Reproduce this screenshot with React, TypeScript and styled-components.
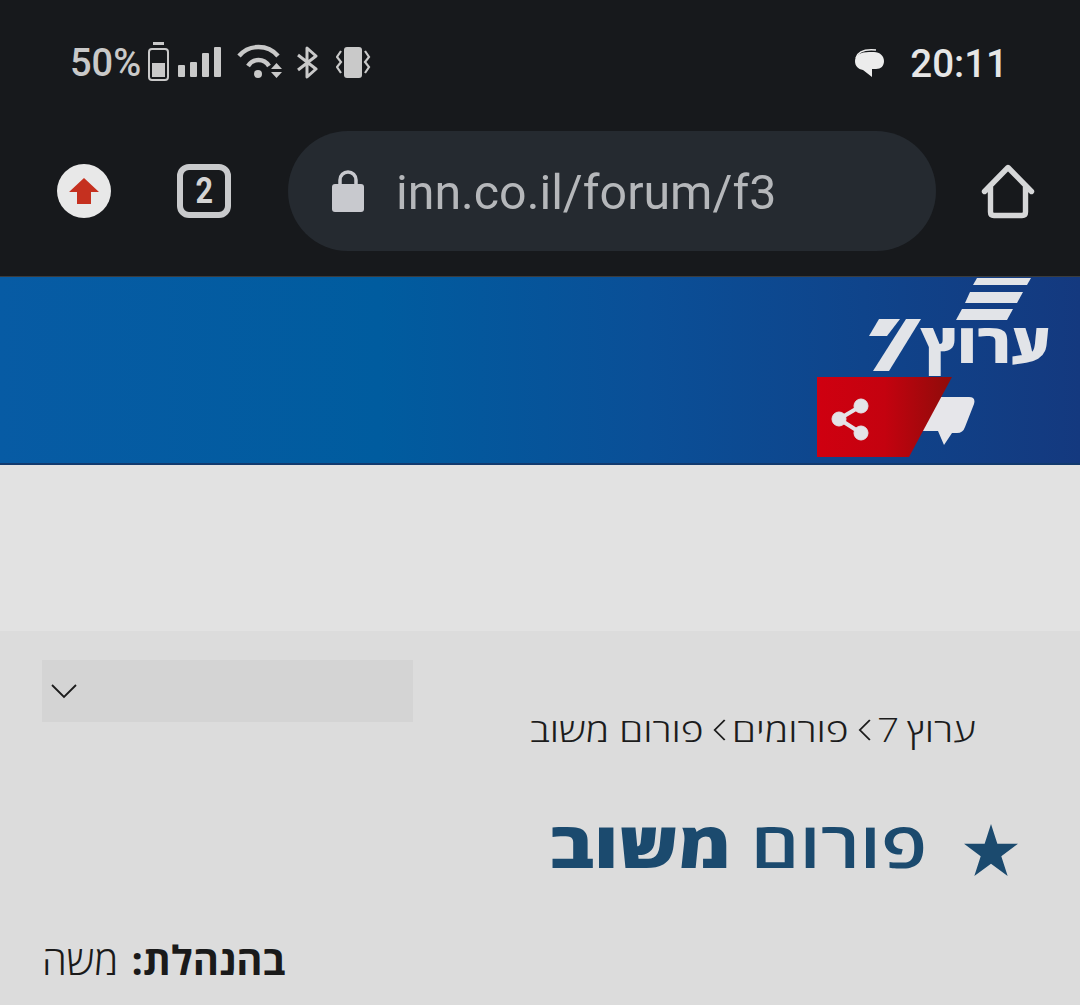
import styled, { createGlobalStyle } from "styled-components";

const GlobalStyle = createGlobalStyle`
  html, body {
    margin: 0;
    padding: 0;
    background: #dcdcdc;
  }
  body {
    font-family: "Liberation Sans", sans-serif;
  }
`;

const crumbs = ["ערוץ 7", "פורומים", "פורום משוב"];

const App = () => {
  return (
    <Page>
      <GlobalStyle />
      <StatusBar>
        <StatusLeft>
          <Percent>50%</Percent>
          <BatteryIcon />
          <SignalIcon />
          <WifiIcon />
          <BluetoothIcon />
          <VibrateIcon />
        </StatusLeft>
        <StatusRight>
          <ChatIcon />
          <Clock>20:11</Clock>
        </StatusRight>
      </StatusBar>
      <Toolbar>
        <UpdateBadge>
          <svg width="30" height="26" viewBox="0 0 30 26">
            <path d="M15 0 L30 14 H22 V26 H8 V14 H0 Z" fill="#c5301f" />
          </svg>
        </UpdateBadge>
        <TabCount>
          <TabDigit>2</TabDigit>
        </TabCount>
        <UrlBar>
          <svg width="32" height="42" viewBox="0 0 32 42">
            <path d="M8 18 V10 a8 8 0 0 1 16 0 V18" fill="none" stroke="#c8c9ce" strokeWidth="3.5" />
            <rect x="0" y="14" width="32" height="28" rx="3" fill="#c8c9ce" />
          </svg>
          <UrlText>inn.co.il/forum/f3</UrlText>
        </UrlBar>
        <HomeButton>
          <svg width="54" height="58" viewBox="0 0 54 58">
            <path
              d="M3.5 29.5 L27 5.5 L50.5 29.5 M9.5 25 V50 Q9.5 53.5 13 53.5 H41 Q44.5 53.5 44.5 50 V25"
              fill="none"
              stroke="#d6d7d8"
              strokeWidth="5.4"
              strokeLinecap="round"
              strokeLinejoin="round"
            />
          </svg>
        </HomeButton>
      </Toolbar>
      <SiteHeader>
        <Logo>
          <svg width="184" height="106" viewBox="0 0 184 106">
            <path d="M109 1 H163 L159 8 H105 Z" fill="#e2e4e8" />
            <path d="M102 15 H155 L149 26 H97 Z" fill="#e2e4e8" />
            <path d="M94 32 H145 L139 43 H88 Z" fill="#e2e4e8" />
            <path d="M11 42 H32 L19 59 H1 Z" fill="#e2e4e8" />
            <path d="M38 42 H53 L21 94 H5 Z" fill="#e2e4e8" />
            <text
              x="0"
              y="0"
              transform="translate(183 86) scale(1.13 1)"
              textAnchor="start"
              direction="rtl"
              fontFamily="'Open Sans', sans-serif"
              fontWeight="800"
              fontSize="55"
              fill="#e2e4e8"
            >
              ערוץ
            </text>
          </svg>
        </Logo>
        <ShareRow>
          <svg width="158" height="80" viewBox="0 0 158 80">
            <defs>
              <linearGradient id="shareRed" x1="0" y1="0" x2="1" y2="0">
                <stop offset="0" stopColor="#cf0010" />
                <stop offset="0.5" stopColor="#c4020f" />
                <stop offset="1" stopColor="#8e0c0a" />
              </linearGradient>
            </defs>
            <path
              d="M120 20 H152 Q159 20 157 27 L148 50 Q146 56 140 56 H135 L127 68 L121 54 H98 Z"
              fill="#e6e6ea"
            />
            <path d="M0 0 H135 L92 80 H0 Z" fill="url(#shareRed)" />
            <g fill="#e4e4e8" stroke="#e4e4e8">
              <circle cx="22" cy="42" r="7" />
              <circle cx="44" cy="29" r="7" />
              <circle cx="44" cy="56" r="7" />
              <path d="M22 42 L44 29 M22 42 L44 56" strokeWidth="4" />
            </g>
          </svg>
        </ShareRow>
      </SiteHeader>
      <AdBand />
      <Content>
        <TopRow>
          <Dropdown>
            <svg width="28" height="16" viewBox="0 0 28 16">
              <path d="M2 2 L14 14 L26 2" fill="none" stroke="#1c1c1c" strokeWidth="1.8" />
            </svg>
          </Dropdown>
          <Breadcrumb>
            {crumbs.map((label, i) => (
              <Crumb key={label} $tight={i === 0}>
                {i > 0 && (
                  <svg width="11" height="22" viewBox="0 0 11 22">
                    <path d="M10 1 L1.5 11 L10 21" fill="none" stroke="#1c1c1c" strokeWidth="1.6" />
                  </svg>
                )}
                <span>{label}</span>
              </Crumb>
            ))}
          </Breadcrumb>
        </TopRow>
        <TitleRow>
          <svg width="54" height="52" viewBox="0 0 56 54">
            <path
              d="M28 0 L34.6 20.6 H56 L38.7 33.4 L45.3 54 L28 41.2 L10.7 54 L17.3 33.4 L0 20.6 H21.4 Z"
              fill="#1b4a6e"
            />
          </svg>
          <Title>
            פורום <b>משוב</b>
          </Title>
        </TitleRow>
        <Managers>
          <b>בהנהלת:</b> משה
        </Managers>
      </Content>
    </Page>
  );
};

export default App;

const BatteryIcon = () => (
  <StatusIcon width="21" height="39" viewBox="0 0 21 39" $after={9} $lift={4}>
    <rect x="5" y="0" width="11" height="3" fill="#c9c9c9" />
    <rect x="1" y="7" width="19" height="31" rx="3" fill="none" stroke="#c9c9c9" strokeWidth="2" />
    <rect x="4" y="21" width="13" height="14" fill="#c9c9c9" />
  </StatusIcon>
);

const SignalIcon = () => (
  <StatusIcon width="43" height="30" viewBox="0 0 43 30" $after={16} $lift={2}>
    <rect x="0" y="18" width="7" height="12" rx="1" fill="#c9c9c9" />
    <rect x="12" y="15" width="7" height="15" rx="1" fill="#c9c9c9" />
    <rect x="24" y="6" width="7" height="24" rx="1" fill="#c9c9c9" />
    <rect x="36" y="0" width="7" height="30" rx="1" fill="#c9c9c9" />
  </StatusIcon>
);

const WifiIcon = () => (
  <StatusIcon width="46" height="35" viewBox="0 0 46 35" $after={13} $lift={4}>
    <g fill="none" stroke="#c9c9c9" strokeWidth="4.4">
      <path d="M2 12 C12 0 31 0 41 12" />
      <path d="M11 22 C16 14 27 14 32 22" />
    </g>
    <circle cx="21" cy="30" r="4" fill="#c9c9c9" />
    <path d="M34 25 L39.5 19 L45 25 Z M34 28 H45 L39.5 34 Z" fill="#c9c9c9" />
  </StatusIcon>
);

const BluetoothIcon = () => (
  <StatusIcon width="22" height="33" viewBox="0 0 22 33" $after={18} $lift={2}>
    <path
      d="M2 9 L20 23 L11 31 V2 L20 10 L2 24"
      fill="none"
      stroke="#c9c9c9"
      strokeWidth="3"
      strokeLinejoin="round"
    />
  </StatusIcon>
);

const VibrateIcon = () => (
  <StatusIcon width="35" height="31" viewBox="0 0 35 31" $after={0} $lift={2}>
    <rect x="8" y="0" width="18" height="31" rx="3" fill="#c9c9c9" />
    <g fill="none" stroke="#c9c9c9" strokeWidth="2.2">
      <path d="M5 4 L1 10 L5 15 L1 20 L5 26" />
      <path d="M29 4 L33 10 L29 15 L33 20 L29 26" />
    </g>
  </StatusIcon>
);

const ChatIcon = () => (
  <svg width="29" height="28" viewBox="0 0 29 28">
    <path d="M1 9 C3 2 11 0 21 1" fill="none" stroke="#ececec" strokeWidth="1.4" />
    <path
      d="M0 12 C0 6 6 3 14 3 H19 C25 3 29 7 29 12 C29 17 26 20 21 20 H17 V28 L8 21 C3 20 0 17 0 12 Z"
      fill="#ececec"
    />
  </svg>
);

const StatusIcon = styled.svg<{ $after: number; $lift: number }>`
  flex-shrink: 0;
  margin-right: ${(p) => p.$after}px;
  margin-bottom: ${(p) => p.$lift}px;
`;

const Page = styled.div`
  width: 1080px;
  height: 1005px;
  overflow: hidden;
  display: flex;
  flex-direction: column;
`;

const StatusBar = styled.div`
  height: 126px;
  box-sizing: border-box;
  background: #17191c;
  padding: 0 72px 0 70px;
  display: flex;
  justify-content: space-between;
  align-items: center;
`;

const StatusLeft = styled.div`
  display: flex;
  align-items: center;
`;

const StatusRight = styled.div`
  display: flex;
  align-items: center;
  gap: 26px;
`;

const Percent = styled.span`
  font-family: Roboto, sans-serif;
  font-size: 38px;
  font-weight: 500;
  color: #c9c9c9;
  margin-right: 7px;
`;

const Clock = styled.span`
  font-family: Roboto, sans-serif;
  font-size: 38.5px;
  font-weight: 500;
  color: #e6e6e6;
`;

const Toolbar = styled.div`
  height: 151px;
  box-sizing: border-box;
  background: #17191c;
  border-bottom: 1px solid #3a3c3e;
  padding: 0 45px 20px 57px;
  display: flex;
  align-items: center;
`;

const UpdateBadge = styled.div`
  width: 54px;
  height: 54px;
  border-radius: 50%;
  background: #e8e8e8;
  display: flex;
  align-items: center;
  justify-content: center;
  margin-right: 66px;
`;

const TabCount = styled.div`
  width: 54px;
  height: 54px;
  box-sizing: border-box;
  border: 6px solid #c9cacc;
  border-radius: 12px;
  display: flex;
  align-items: center;
  justify-content: center;
  margin-right: 57px;
`;

const TabDigit = styled.span`
  color: #d4d4d4;
  font-family: Roboto, sans-serif;
  font-size: 36px;
  font-weight: 700;
  transform: scaleX(0.85);
`;

const UrlBar = styled.div`
  width: 648px;
  height: 120px;
  border-radius: 60px;
  background: #252a30;
  box-sizing: border-box;
  padding-left: 44px;
  display: flex;
  align-items: center;
  gap: 32px;
  margin-right: 45px;
`;

const UrlText = styled.span`
  font-family: Roboto, sans-serif;
  font-size: 48.3px;
  color: #b5b7ba;
  padding-top: 2px;
`;

const HomeButton = styled.div`
  display: flex;
`;

const SiteHeader = styled.header`
  height: 188px;
  box-sizing: border-box;
  border-bottom: 2px solid #123a6e;
  background: linear-gradient(90deg, #075ba4 0%, #005c9f 35%, #0a4f97 60%, #14397f 100%);
  padding-right: 28px;
  display: flex;
  flex-direction: column;
  align-items: flex-end;
`;

const Logo = styled.div`
  display: flex;
  align-items: flex-start;
  height: 100px;
`;

const ShareRow = styled.div`
  display: flex;
  margin-right: 77px;
  position: relative;
`;

const AdBand = styled.div`
  height: 166px;
  background: #e2e2e2;
`;

const Content = styled.main`
  flex: 1;
  background: #dcdcdc;
  padding: 29px 42px 0 42px;
  display: flex;
  flex-direction: column;
`;

const TopRow = styled.div`
  display: flex;
  justify-content: space-between;
  align-items: flex-start;
`;

const Dropdown = styled.div`
  width: 371px;
  height: 62px;
  background: #d4d4d4;
  box-sizing: border-box;
  padding-left: 8px;
  display: flex;
  align-items: center;
`;

const Breadcrumb = styled.nav`
  direction: rtl;
  display: flex;
  gap: 5px;
  font-family: "Open Sans", "Liberation Sans", sans-serif;
  font-size: 33px;
  font-weight: 300;
  color: #1c1c1c;
  margin: 47px 62px 0 0;
  transform: scaleX(1.18);
  transform-origin: right center;
`;

const Crumb = styled.div<{ $tight: boolean }>`
  display: flex;
  align-items: center;
  gap: 8px;
  white-space: nowrap;
  word-spacing: ${(p) => (p.$tight ? "-2px" : "0")};
`;

const TitleRow = styled.div`
  display: flex;
  flex-direction: row-reverse;
  align-items: center;
  gap: 37px;
  margin: 60px 20px 0 0;
`;

const Title = styled.h1`
  direction: rtl;
  margin: 0 0 12px;
  font-family: "Open Sans", "Liberation Sans", sans-serif;
  font-size: 64px;
  font-weight: 600;
  color: #1b4a6e;
  line-height: 1;
  transform: scaleX(1.187);
  transform-origin: right center;
  b {
    font-weight: 800;
  }
`;

const Managers = styled.div`
  direction: rtl;
  text-align: left;
  margin-top: 44px;
  font-family: "Open Sans", "Liberation Sans", sans-serif;
  font-size: 40px;
  font-weight: 300;
  word-spacing: 3px;
  color: #1a1a1a;
  b {
    font-weight: 700;
  }
`;
